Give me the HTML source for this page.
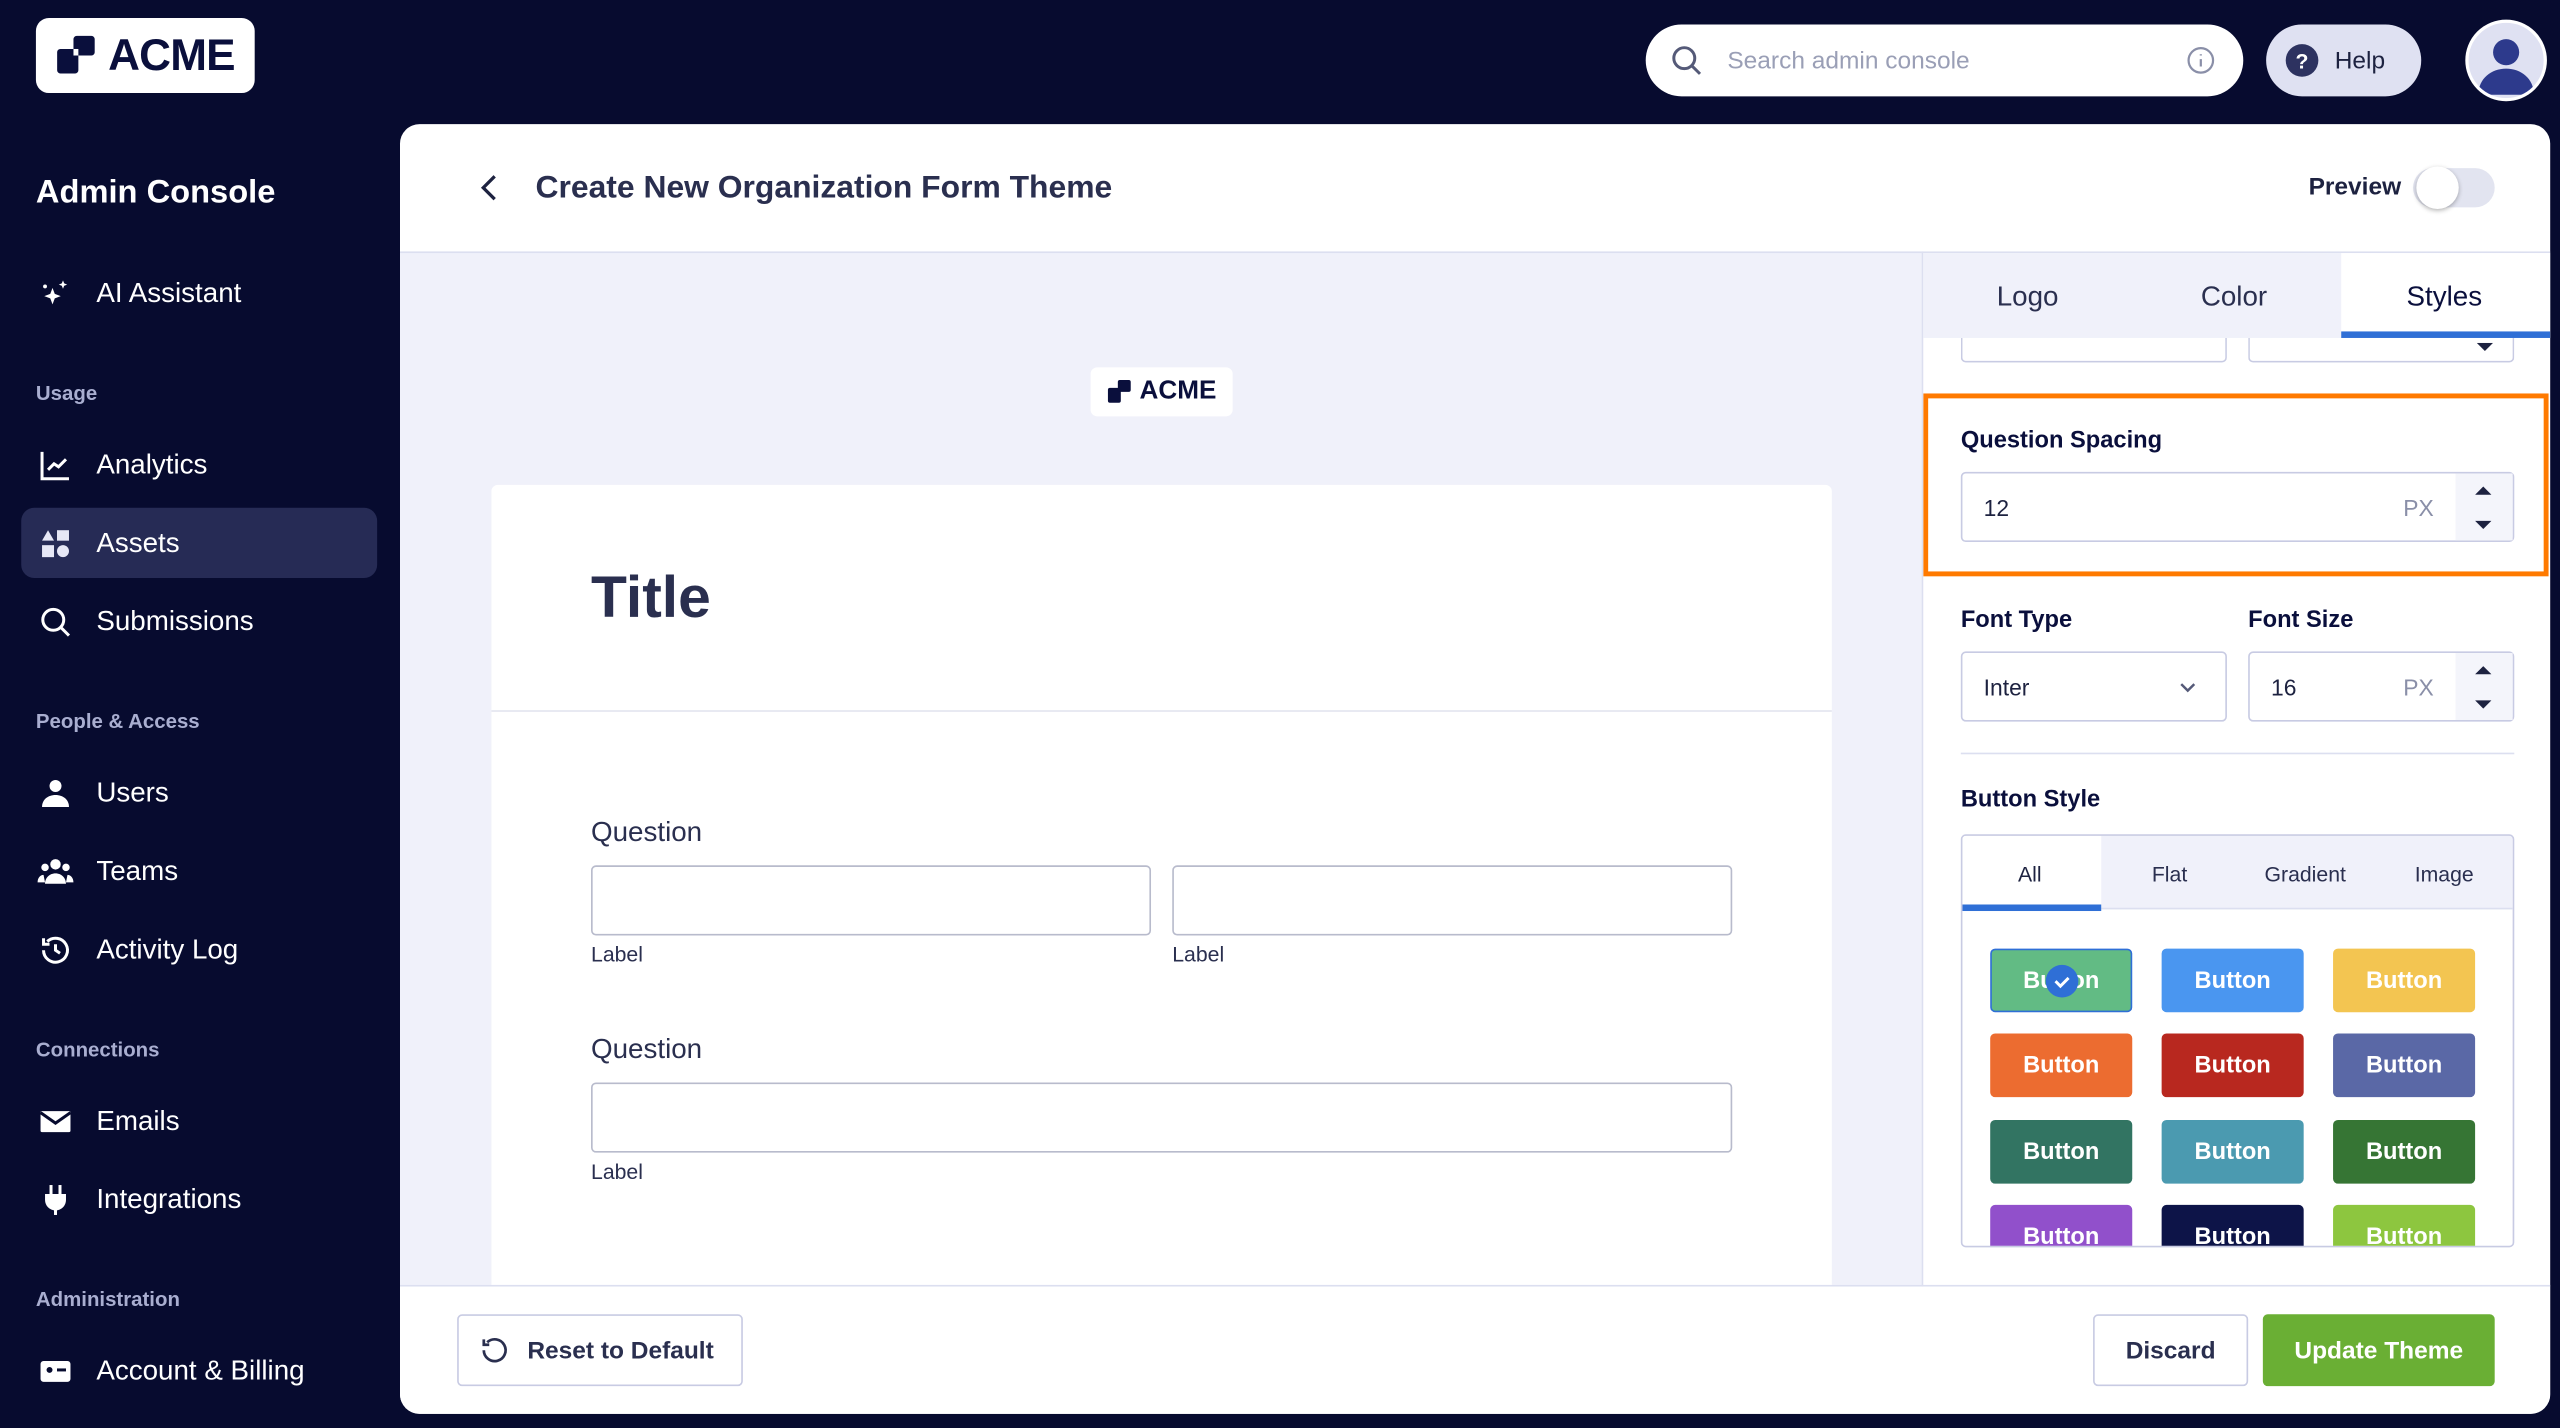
<!DOCTYPE html>
<html><head><meta charset="utf-8"><style>
*{box-sizing:border-box;margin:0;padding:0}
html,body{width:2560px;height:1428px;overflow:hidden;background:#070b2f}
#w{width:1568px;height:875px;transform:scale(1.632653);transform-origin:0 0;position:relative;background:#070b2f;font-family:"Liberation Sans",sans-serif;color:#1d2240}
.abs{position:absolute}
.nav{position:absolute;left:23px;color:#fff;font-size:17px;display:flex;align-items:center;gap:14px}
.nav svg{width:22px;height:22px}
.sec{position:absolute;left:22px;color:#a9aed0;font-size:12.5px;font-weight:bold}
.inp{position:absolute;background:#fff;border:1px solid #c8cbe3;border-radius:3px}
.btn{position:absolute;width:87px;height:39px;border-radius:3px;color:#fff;font-weight:bold;font-size:14.5px;display:flex;align-items:center;justify-content:center}
.lbl{position:absolute;font-size:14.5px;font-weight:bold;color:#0a0f3c}
.spin{position:absolute;right:0;top:0;width:35px;height:41px;background:#f4f5fb}
</style></head><body><div id="w">
<div class="abs" style="left:22px;top:11px;width:134px;height:46px;background:#fff;border-radius:8px;display:flex;align-items:center;justify-content:center;gap:4px">
<svg width="28" height="26" viewBox="0 0 28 26"><rect x="1" y="9" width="13" height="15" rx="2" fill="#0a0f3c"/><rect x="11" y="1" width="13" height="12" rx="2" fill="#0a0f3c"/><rect x="11" y="9" width="3" height="4" fill="#fff"/></svg>
<span style="font-size:27px;font-weight:bold;color:#0a0f3c;letter-spacing:-0.5px">ACME</span></div>
<div class="abs" style="left:22px;top:107px;color:#fff;font-size:20px;font-weight:600">Admin Console</div>
<div class="nav" style="top:169px"><svg viewBox="0 0 24 24" fill="#fff"><path d="M10 8l1.5 4 4 1.5-4 1.5-1.5 4-1.5-4-4-1.5 4-1.5z"/><path d="M17 3l.8 2 2 .8-2 .8-.8 2-.8-2-2-.8 2-.8z"/><circle cx="5" cy="7" r="1.3"/></svg>AI Assistant</div>
<div class="sec" style="top:234px">Usage</div>
<div class="abs" style="left:13px;top:311px;width:218px;height:43px;background:#262b55;border-radius:8px"></div>
<div class="nav" style="top:274px"><svg viewBox="0 0 24 24" fill="none" stroke="#fff" stroke-width="2"><path d="M3 3v18h18M7 15l4-4 3 2 5-5"/></svg>Analytics</div>
<div class="nav" style="top:322px"><svg viewBox="0 0 24 24" fill="#e6e7f5"><path d="M7 3l4 7H3z"/><rect x="13" y="3" width="8" height="7"/><rect x="3" y="13" width="8" height="8"/><circle cx="17" cy="17" r="4"/></svg>Assets</div>
<div class="nav" style="top:370px"><svg viewBox="0 0 24 24" fill="none" stroke="#fff" stroke-width="2"><circle cx="10.5" cy="10.5" r="7"/><path d="M16 16l5 5"/></svg>Submissions</div>
<div class="sec" style="top:435px">People &amp; Access</div>
<div class="nav" style="top:475px"><svg viewBox="0 0 24 24" fill="#fff"><circle cx="12" cy="7" r="4"/><path d="M3 21c0-5 4-8 9-8s9 3 9 8z"/></svg>Users</div>
<div class="nav" style="top:523px"><svg viewBox="0 0 24 24" fill="#fff"><circle cx="12" cy="7" r="3.5"/><circle cx="5" cy="9" r="2.5"/><circle cx="19" cy="9" r="2.5"/><path d="M5 20c0-4 3-7 7-7s7 3 7 7zM0 19c0-3 2-5 4-5l1 5zM24 19c0-3-2-5-4-5l-1 5z"/></svg>Teams</div>
<div class="nav" style="top:571px"><svg viewBox="0 0 24 24" fill="none" stroke="#fff" stroke-width="2"><path d="M4 12a8 8 0 1 0 2.5-5.8M4 4v4h4"/><path d="M12 8v4l3 2"/></svg>Activity Log</div>
<div class="sec" style="top:636px">Connections</div>
<div class="nav" style="top:676px"><svg viewBox="0 0 24 24" fill="#fff"><rect x="2" y="5" width="20" height="14" rx="1"/><path d="M2 6l10 7 10-7" stroke="#070b2f" stroke-width="2" fill="none"/></svg>Emails</div>
<div class="nav" style="top:724px"><svg viewBox="0 0 24 24" fill="#fff"><rect x="8" y="2" width="2" height="6"/><rect x="14" y="2" width="2" height="6"/><path d="M5 8h14v4a7 7 0 0 1-14 0z"/><rect x="11" y="17" width="2" height="5"/></svg>Integrations</div>
<div class="sec" style="top:789px">Administration</div>
<div class="nav" style="top:829px"><svg viewBox="0 0 24 24" fill="#fff"><rect x="2" y="5" width="20" height="14" rx="2"/><circle cx="8" cy="11" r="2" fill="#070b2f"/><rect x="13" y="10" width="6" height="2" fill="#070b2f"/></svg>Account &amp; Billing</div>
<div class="abs" style="left:1008px;top:15px;width:366px;height:44px;background:#fff;border-radius:22px;display:flex;align-items:center;padding-left:14px;color:#9a9fb6;font-size:15px">
<svg width="22" height="22" viewBox="0 0 24 24" fill="none" stroke="#555a78" stroke-width="2"><circle cx="10.5" cy="10.5" r="7"/><path d="M16 16l5 5"/></svg>
<span style="margin-left:14px">Search admin console</span>
<svg style="position:absolute;right:17px" width="18" height="18" viewBox="0 0 24 24" fill="none" stroke="#8a8fa8" stroke-width="1.8"><circle cx="12" cy="12" r="10"/><path d="M12 11v6M12 7v1"/></svg></div>
<div class="abs" style="left:1388px;top:15px;width:95px;height:44px;background:#dfe1f2;border-radius:22px;display:flex;align-items:center;padding-left:12px;gap:10px;font-size:15px;color:#1d2240">
<span style="width:20px;height:20px;border-radius:50%;background:#2d3260;color:#fff;font-size:13px;font-weight:bold;display:flex;align-items:center;justify-content:center">?</span>Help</div>
<div class="abs" style="left:1510px;top:12px;width:50px;height:50px;border-radius:50%;background:#dfe1f2;border:2px solid #fff;overflow:hidden">
<svg width="46" height="46" viewBox="0 0 46 46"><circle cx="23" cy="18" r="8" fill="#2d3a8c"/><path d="M6 44c0-10 8-16 17-16s17 6 17 16z" fill="#2d3a8c"/></svg></div>
<div class="abs" style="left:245px;top:76px;width:1317px;height:790px;background:#fff;border-radius:12px;overflow:hidden">
<div class="abs" style="left:0;top:78px;width:932px;height:634px;background:#f0f1fa;border-top:1px solid #dcdff0"></div>
<svg class="abs" style="left:48px;top:30px" width="14" height="18" viewBox="0 0 14 18" fill="none" stroke="#1d2240" stroke-width="2"><path d="M10 2L3 9l7 7"/></svg>
<div class="abs" style="left:83px;top:28px;font-size:19.5px;font-weight:600;color:#2a2f4f">Create New Organization Form Theme</div>
<div class="abs" style="left:1169px;top:30px;font-size:15px;font-weight:bold;color:#1d2240">Preview</div>
<div class="abs" style="left:1233px;top:27px;width:50px;height:24px;border-radius:12px;background:#e2e4f0"><div style="position:absolute;left:2px;top:-1px;width:26px;height:26px;border-radius:50%;background:#fff;box-shadow:0 1px 3px rgba(0,0,0,.3)"></div></div>
<div class="abs" style="left:423px;top:149px;width:87px;height:30px;background:#fff;border-radius:4px;display:flex;align-items:center;justify-content:center;gap:3px"><svg width="17" height="16" viewBox="0 0 28 26"><rect x="1" y="9" width="13" height="15" rx="2" fill="#0a0f3c"/><rect x="11" y="1" width="13" height="12" rx="2" fill="#0a0f3c"/></svg><span style="font-weight:bold;font-size:16px;color:#0a0f3c">ACME</span></div>
<div class="abs" style="left:56px;top:221px;width:821px;height:500px;background:#fff;border-radius:4px">
<div class="abs" style="left:61px;top:48px;font-size:36px;font-weight:bold;color:#2a2f4f">Title</div>
<div class="abs" style="left:0;top:138px;width:821px;height:1px;background:#e3e5ef"></div>
<div class="abs" style="left:61px;top:203px;font-size:17px;color:#2a2f4f">Question</div>
<div class="inp" style="left:61px;top:233px;width:343px;height:43px;border-color:#b8bbcc"></div>
<div class="inp" style="left:417px;top:233px;width:343px;height:43px;border-color:#b8bbcc"></div>
<div class="abs" style="left:61px;top:280px;font-size:13px;color:#2a2f4f">Label</div>
<div class="abs" style="left:417px;top:280px;font-size:13px;color:#2a2f4f">Label</div>
<div class="abs" style="left:61px;top:336px;font-size:17px;color:#2a2f4f">Question</div>
<div class="inp" style="left:61px;top:366px;width:699px;height:43px;border-color:#b8bbcc"></div>
<div class="abs" style="left:61px;top:413px;font-size:13px;color:#2a2f4f">Label</div>
</div>
<div class="abs" style="left:0;top:711px;width:1317px;height:79px;background:#fff;border-top:1px solid #dcdff0"></div>
<div class="abs" style="left:35px;top:729px;width:175px;height:44px;border:1px solid #c8cbe3;border-radius:3px;display:flex;align-items:center;padding-left:12px;gap:10px;font-size:15px;font-weight:bold;color:#2a2f4f">
<svg width="20" height="20" viewBox="0 0 24 24" fill="none" stroke="#2a2f4f" stroke-width="2"><path d="M4 12a8 8 0 1 0 2.5-5.8M4 4v4h4"/></svg>Reset to Default</div>
<div class="abs" style="left:1037px;top:729px;width:95px;height:44px;border:1px solid #c8cbe3;border-radius:3px;display:flex;align-items:center;justify-content:center;font-size:15px;font-weight:bold;color:#2a2f4f">Discard</div>
<div class="abs" style="left:1141px;top:729px;width:142px;height:44px;background:#6aaf34;border-radius:3px;display:flex;align-items:center;justify-content:center;font-size:15px;font-weight:bold;color:#fff">Update Theme</div>
<div class="abs" style="left:932px;top:78px;width:385px;height:634px;border-left:1px solid #dcdff0;border-top:1px solid #dcdff0;overflow:hidden">
<div class="abs" style="left:0;top:0;width:385px;height:52px;background:#f0f1fa"></div>
<div class="abs" style="left:256px;top:0;width:129px;height:52px;background:#fff;border-bottom:4px solid #2f6fd6"></div>
<div class="abs" style="left:45px;top:17px;font-size:17px;color:#2a2f4f">Logo</div>
<div class="abs" style="left:170px;top:17px;font-size:17px;color:#2a2f4f">Color</div>
<div class="abs" style="left:296px;top:17px;font-size:17px;color:#0a0f3c">Styles</div>
<div class="abs" style="left:23px;top:52px;width:163px;height:15px;border:1px solid #c8cbe3;border-top:none;border-radius:0 0 3px 3px"></div>
<div class="abs" style="left:199px;top:52px;width:163px;height:15px;border:1px solid #c8cbe3;border-top:none;border-radius:0 0 3px 3px"><svg style="position:absolute;right:12px;top:3px" width="10" height="5" viewBox="0 0 10 5"><path d="M0 0h10L5 5z" fill="#1d2240"/></svg></div>
<div class="abs" style="left:0;top:86px;width:383px;height:112px;border:3px solid #ff7a00"></div>
<div class="lbl" style="left:23px;top:107px">Question Spacing</div>
<div class="inp" style="left:23px;top:134px;width:339px;height:43px"><span style="position:absolute;left:13px;top:13px;font-size:14px">12</span><span style="position:absolute;left:270px;top:13px;font-size:14px;color:#8a8fa8">PX</span><div class="spin"><svg style="position:absolute;left:12px;top:8px" width="10" height="26" viewBox="0 0 10 26"><path d="M0 5h10L5 0zM0 21h10L5 26z" fill="#1d2240"/></svg></div></div>
<div class="lbl" style="left:23px;top:217px">Font Type</div>
<div class="lbl" style="left:199px;top:217px">Font Size</div>
<div class="inp" style="left:23px;top:244px;width:163px;height:43px"><span style="position:absolute;left:13px;top:13px;font-size:14px">Inter</span><svg style="position:absolute;right:18px;top:17px" width="10" height="8" viewBox="0 0 10 8" fill="none" stroke="#555a78" stroke-width="1.5"><path d="M1 2l4 4 4-4"/></svg></div>
<div class="inp" style="left:199px;top:244px;width:163px;height:43px"><span style="position:absolute;left:13px;top:13px;font-size:14px">16</span><span style="position:absolute;left:94px;top:13px;font-size:14px;color:#8a8fa8">PX</span><div class="spin"><svg style="position:absolute;left:12px;top:8px" width="10" height="26" viewBox="0 0 10 26"><path d="M0 5h10L5 0zM0 21h10L5 26z" fill="#1d2240"/></svg></div></div>
<div class="abs" style="left:23px;top:306px;width:339px;height:1px;background:#dcdff0"></div>
<div class="lbl" style="left:23px;top:327px">Button Style</div>
<div class="abs" style="left:23px;top:356px;width:339px;height:253px;border:1px solid #c8cbe3;border-radius:3px;overflow:hidden">
<div class="abs" style="left:0;top:0;width:339px;height:45px;background:#f0f1fa;border-bottom:1px solid #dcdff0"></div>
<div class="abs" style="left:0;top:0;width:85px;height:46px;background:#fff;border-bottom:4px solid #2f6fd6"></div>
<div class="abs" style="left:34px;top:16px;font-size:13px">All</div>
<div class="abs" style="left:116px;top:16px;font-size:13px;color:#2a2f4f">Flat</div>
<div class="abs" style="left:185px;top:16px;font-size:13px;color:#2a2f4f">Gradient</div>
<div class="abs" style="left:277px;top:16px;font-size:13px;color:#2a2f4f">Image</div>
<div class="btn" style="left:17px;top:69px;background:#62bb84;border:1px solid #2f6fd6">Button</div>
<div class="abs" style="left:51px;top:79px;width:20px;height:20px;border-radius:50%;background:#2f6fd6"><svg width="20" height="20" viewBox="0 0 20 20" fill="none" stroke="#fff" stroke-width="1.8"><path d="M6 10l3 3 5-5"/></svg></div>
<div class="btn" style="left:122px;top:69px;background:#4a96f0">Button</div>
<div class="btn" style="left:227px;top:69px;background:#f3c551">Button</div>
<div class="btn" style="left:17px;top:121px;background:#ec6c30">Button</div>
<div class="btn" style="left:122px;top:121px;background:#b8281f">Button</div>
<div class="btn" style="left:227px;top:121px;background:#5a68a6">Button</div>
<div class="btn" style="left:17px;top:174px;background:#327462">Button</div>
<div class="btn" style="left:122px;top:174px;background:#4b9ab0">Button</div>
<div class="btn" style="left:227px;top:174px;background:#367534">Button</div>
<div class="btn" style="left:17px;top:226px;background:#9150cb">Button</div>
<div class="btn" style="left:122px;top:226px;background:#0d1448">Button</div>
<div class="btn" style="left:227px;top:226px;background:#8dc63f">Button</div>
</div>
</div>
</div>
</div></body></html>
